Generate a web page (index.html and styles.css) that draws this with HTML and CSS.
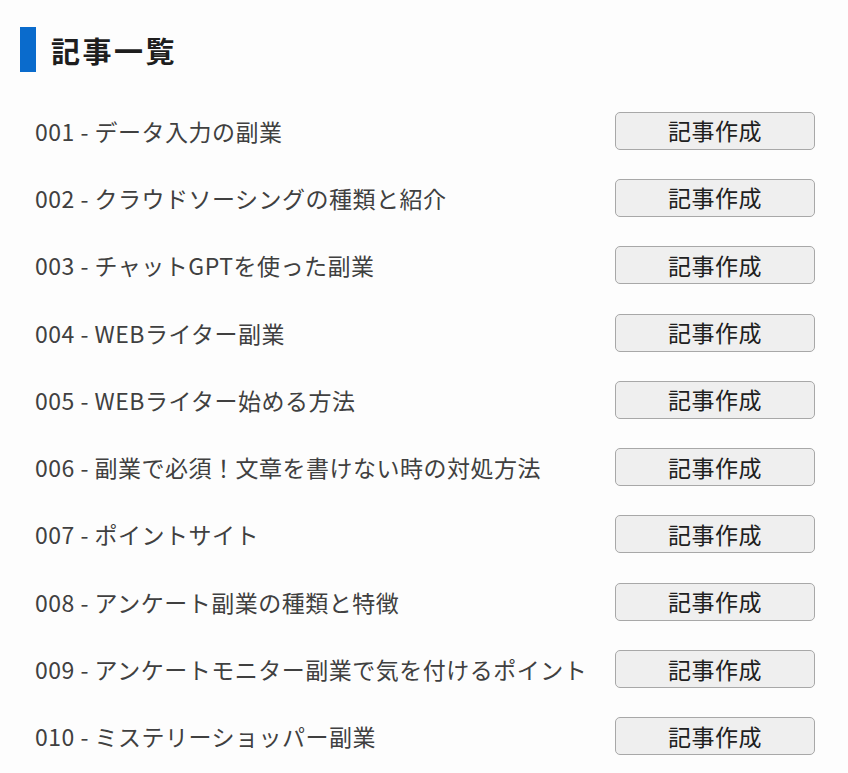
FILE: index.html
```html
<!DOCTYPE html>
<html lang="ja">
<head>
<meta charset="utf-8">
<link rel="stylesheet" href="styles.css">
</head>
<body>
<div class="page">
  <h2 class="title">記事一覧</h2>
  <ul class="list">
    <li class="row"><span class="name">001 - データ入力の副業</span><button class="btn">記事作成</button></li>
    <li class="row"><span class="name">002 - クラウドソーシングの種類と紹介</span><button class="btn">記事作成</button></li>
    <li class="row"><span class="name">003 - チャットGPTを使った副業</span><button class="btn">記事作成</button></li>
    <li class="row"><span class="name">004 - WEBライター副業</span><button class="btn">記事作成</button></li>
    <li class="row"><span class="name">005 - WEBライター始める方法</span><button class="btn">記事作成</button></li>
    <li class="row"><span class="name">006 - 副業で必須！文章を書けない時の対処方法</span><button class="btn">記事作成</button></li>
    <li class="row"><span class="name">007 - ポイントサイト</span><button class="btn">記事作成</button></li>
    <li class="row"><span class="name">008 - アンケート副業の種類と特徴</span><button class="btn">記事作成</button></li>
    <li class="row"><span class="name">009 - アンケートモニター副業で気を付けるポイント</span><button class="btn">記事作成</button></li>
    <li class="row"><span class="name">010 - ミステリーショッパー副業</span><button class="btn">記事作成</button></li>
  </ul>
</div>
</body>
</html>
```

FILE: styles.css
```css
html, body {
  margin: 0;
  padding: 0;
  background: #fdfdfd;
}
body {
  font-family: "Noto Sans CJK JP", "Noto Sans", sans-serif;
  color: #3a3a3a;
}
.page {
  width: 815px;
  padding-top: 27px;
}
.title {
  margin: 0 0 0 20px;
  height: 45px;
  border-left: 16px solid #0a6bcc;
  padding-left: 15px;
  display: flex;
  align-items: center;
  font-size: 29px;
  font-weight: 700;
  color: #1e1e1e;
  letter-spacing: 2.5px;
}
.list {
  list-style: none;
  margin: 25px 0 0 0;
  padding: 0 0 0 35px;
}
.row {
  height: 67.3px;
  display: flex;
  align-items: center;
  justify-content: space-between;
}
.name {
  font-size: 23px;
  letter-spacing: 0.5px;
  color: #404040;
}
.btn {
  width: 200px;
  height: 38px;
  background: #efefef;
  border: 1px solid #a8a8a8;
  border-radius: 5px;
  font-family: "Noto Sans CJK JP", sans-serif;
  font-size: 23px;
  letter-spacing: 0.5px;
  color: #202020;
  padding: 0;
  line-height: 1;
}
```
